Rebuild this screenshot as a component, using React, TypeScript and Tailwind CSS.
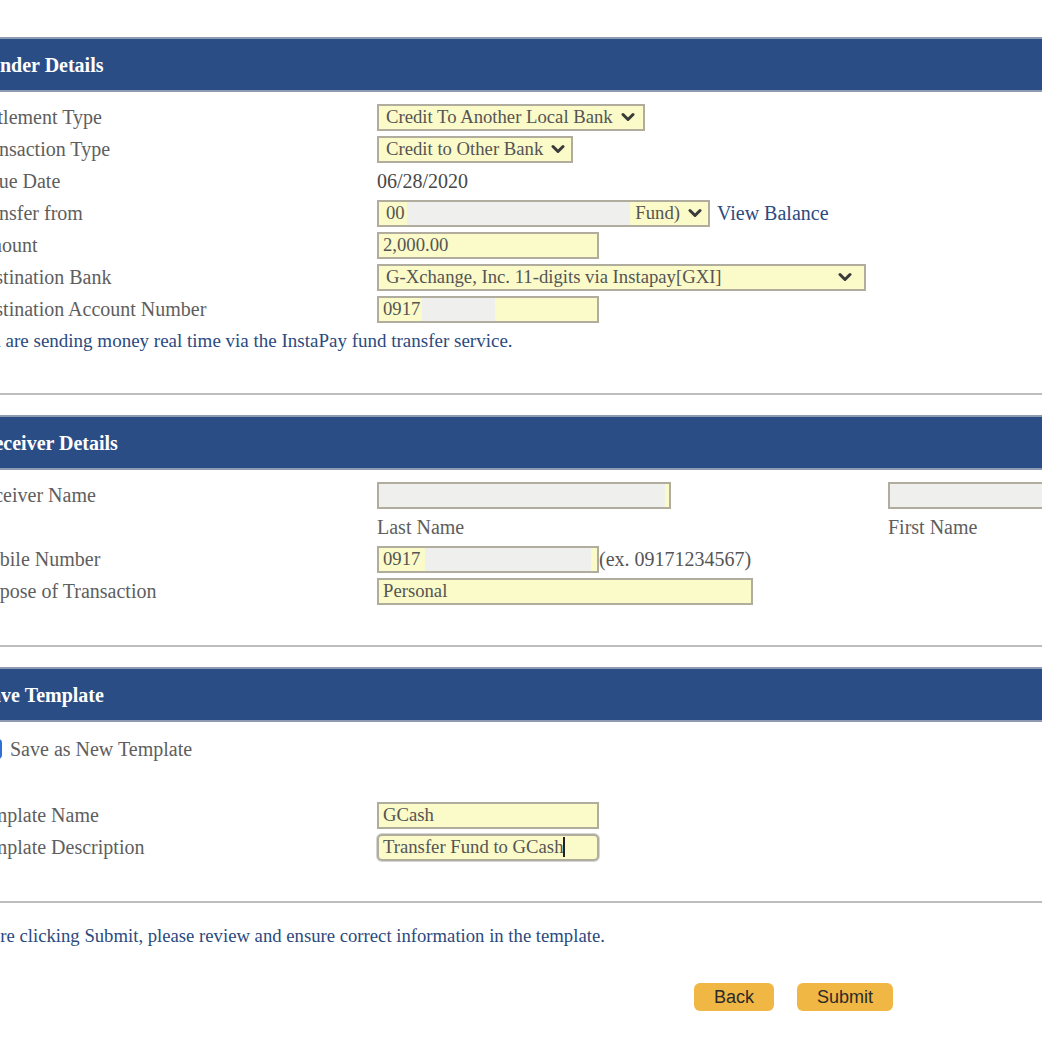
import React from 'react';

const serif = "font-['Liberation_Serif','Times_New_Roman',serif]";

const Chevron = () => (
  <svg width="14" height="10" viewBox="0 0 14 10" className="shrink-0">
    <path d="M2 2.5 L7 7.5 L12 2.5" fill="none" stroke="#3a3a3a" strokeWidth="3" strokeLinecap="round" strokeLinejoin="round" />
  </svg>
);

const SectionBar = ({ title }: { title: string }) => (
  <div className="h-[55px] flex items-center pl-[8px] bg-[#2b4d86] border-y-2 border-[#8d9ab2]">
    <span className="text-white font-bold text-[20px]">{title}</span>
  </div>
);

const Separator = () => <div className="h-[2px] bg-[#bdbdbd] w-full" />;

const Row = ({ label, children }: { label?: string; children?: React.ReactNode }) => (
  <div className="flex items-center h-[32px] whitespace-nowrap">
    <div className="w-[405px] shrink-0 text-[20px] text-[#5e5e5e]">{label}</div>
    {children}
  </div>
);

const Field = ({ width, children, className = '' }: { width: string; children?: React.ReactNode; className?: string }) => (
  <div className={`${width} h-[27px] shrink-0 flex items-center bg-[#fbfac9] border-2 border-[#b0ad9f] text-[18.7px] text-[#555] leading-none whitespace-nowrap overflow-hidden ${className}`}>
    {children}
  </div>
);

export default function App() {
  return (
    <div className={`w-[1042px] h-[1042px] overflow-hidden bg-white ${serif}`}>
      <div className="-ml-[28px] w-[1200px] pt-[37px]">
        {/* Sender Details */}
        <SectionBar title="Sender Details" />
        <div className="pt-[9px]">
          <Row label="Settlement Type">
            <Field width="w-[268px]" className="px-[7px] gap-[8px]">
              <span>Credit To Another Local Bank</span>
              <Chevron />
            </Field>
          </Row>
          <Row label="Transaction Type">
            <Field width="w-[196px]" className="px-[7px] gap-[8px]">
              <span>Credit to Other Bank</span>
              <Chevron />
            </Field>
          </Row>
          <Row label="Value Date">
            <span className="text-[20px] text-[#474747]">06/28/2020</span>
          </Row>
          <Row label="Transfer from">
            <Field width="w-[333px]" className="pl-[7px] pr-[6px]">
              <span className="w-[21px]">00</span>
              <span className="h-full w-[227px] bg-[#efefed]" />
              <span className="ml-[5px]">Fund)</span>
              <span className="ml-[8px]"><Chevron /></span>
            </Field>
            <span className="ml-[7px] text-[20px] text-[#2b4a80]">View Balance</span>
          </Row>
          <Row label="Amount">
            <Field width="w-[222px]" className="px-[4px]">
              <span>2,000.00</span>
            </Field>
          </Row>
          <Row label="Destination Bank">
            <Field width="w-[489px]" className="pl-[7px] pr-[12px] justify-between">
              <span>G-Xchange, Inc. 11-digits via Instapay[GXI]</span>
              <Chevron />
            </Field>
          </Row>
          <Row label="Destination Account Number">
            <Field width="w-[222px]" className="pl-[4px]">
              <span className="w-[39px]">0917</span>
              <span className="h-full w-[73px] bg-[#efefed]" />
            </Field>
          </Row>
          <div className="h-[32px] flex items-center -ml-[2px] text-[19px] text-[#2b4a7e] whitespace-nowrap">
            You are sending money real time via the InstaPay fund transfer service.
          </div>
        </div>
        <div className="h-[36px]" />
        <Separator />
        <div className="h-[20px]" />

        {/* Receiver Details */}
        <SectionBar title="Receiver Details" />
        <div className="pt-[9px]">
          <Row label="Receiver Name">
            <Field width="w-[294px]">
              <span className="h-full flex-1 bg-[#efefed]" />
              <span className="h-full w-[4px]" />
            </Field>
            <Field width="w-[200px]" className="ml-[217px]">
              <span className="h-full w-full bg-[#efefed]" />
            </Field>
          </Row>
          <Row>
            <span className="w-[511px] shrink-0 text-[20px] text-[#5e5e5e]">Last Name</span>
            <span className="text-[20px] text-[#5e5e5e]">First Name</span>
          </Row>
          <Row label="Mobile Number">
            <Field width="w-[222px]" className="pl-[4px]">
              <span className="w-[42px]">0917</span>
              <span className="h-full w-[166px] bg-[#efefed]" />
            </Field>
            <span className="text-[20px] text-[#555]">(ex. 09171234567)</span>
          </Row>
          <Row label="Purpose of Transaction">
            <Field width="w-[376px]" className="px-[4px]">
              <span>Personal</span>
            </Field>
          </Row>
        </div>
        <div className="h-[38px]" />
        <Separator />
        <div className="h-[20px]" />

        {/* Save Template */}
        <SectionBar title="Save Template" />
        <div className="pt-[11px]">
          <div className="h-[32px] flex items-center pl-[10px] gap-[8px]">
            <span className="w-[20px] h-[20px] rounded-[4px] bg-[#2f6fd6] shrink-0" />
            <span className="text-[20px] text-[#5e5e5e]">Save as New Template</span>
          </div>
          <div className="h-[34px]" />
          <Row label="Template Name">
            <Field width="w-[222px]" className="px-[4px]">
              <span>GCash</span>
            </Field>
          </Row>
          <Row label="Template Description">
            <Field width="w-[222px]" className="px-[4px] rounded-[5px] border-[#9b9b96] shadow-[0_0_0_1px_#d6d6d0]">
              <span>Transfer Fund to GCash</span>
              <span className="w-[1.5px] h-[20px] bg-[#222]" />
            </Field>
          </Row>
        </div>
        <div className="h-[38px]" />
        <Separator />

        {/* Footer */}
        <div className="h-[66px] flex items-center -ml-[8px] text-[18.7px] text-[#2b4a7e] whitespace-nowrap">
          Before clicking Submit, please review and ensure correct information in the template.
        </div>
        <div className="flex gap-[23px] ml-[722px] mt-[14px]">
          <button className="w-[80px] h-[28px] rounded-[6px] bg-[#f1b744] text-[18px] text-[#2a2a2a] font-['Liberation_Sans',Arial,sans-serif] leading-none">
            Back
          </button>
          <button className="w-[96px] h-[28px] rounded-[6px] bg-[#f1b744] text-[18px] text-[#2a2a2a] font-['Liberation_Sans',Arial,sans-serif] leading-none">
            Submit
          </button>
        </div>
      </div>
    </div>
  );
}
